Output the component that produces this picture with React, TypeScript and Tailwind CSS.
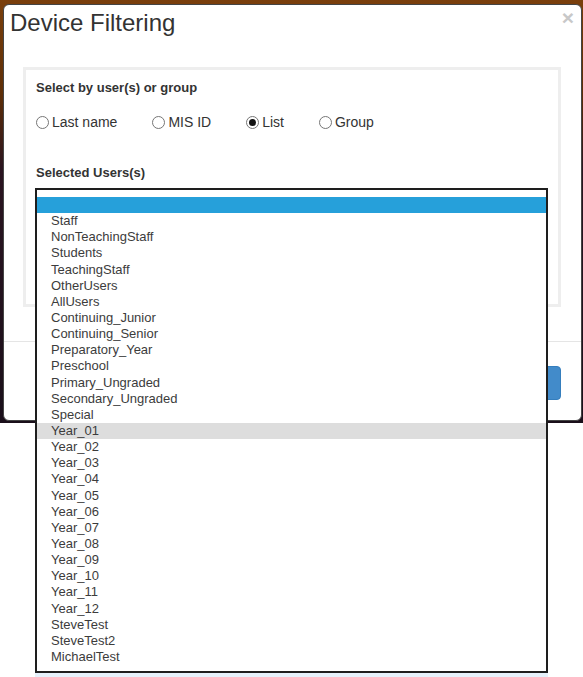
import React from "react";

const options = [
  "",
  "Staff",
  "NonTeachingStaff",
  "Students",
  "TeachingStaff",
  "OtherUsers",
  "AllUsers",
  "Continuing_Junior",
  "Continuing_Senior",
  "Preparatory_Year",
  "Preschool",
  "Primary_Ungraded",
  "Secondary_Ungraded",
  "Special",
  "Year_01",
  "Year_02",
  "Year_03",
  "Year_04",
  "Year_05",
  "Year_06",
  "Year_07",
  "Year_08",
  "Year_09",
  "Year_10",
  "Year_11",
  "Year_12",
  "SteveTest",
  "SteveTest2",
  "MichaelTest",
];

function Radio({ label, checked }: { label: string; checked?: boolean }) {
  return (
    <label className="flex items-center gap-[3px] text-[14px] leading-[20px] text-[#333333]">
      <span className="flex h-[13px] w-[13px] items-center justify-center rounded-full border border-[#767676] bg-white">
        {checked && <span className="h-[7px] w-[7px] rounded-full bg-[#111111]" />}
      </span>
      <span>{label}</span>
    </label>
  );
}

export default function App() {
  return (
    <div
      className="relative h-[677px] w-[583px] overflow-hidden bg-white"
      style={{ fontFamily: '"Liberation Sans", Arial, sans-serif' }}
    >
      {/* backdrop */}
      <div className="h-[423px] bg-[linear-gradient(180deg,#7a3f0c_0%,#5e2e07_22%,#2a1420_40%,#1a0f1a_100%)] pt-[4px] pl-[3px] pr-[1px]">
        <div className="relative flex h-[417px] w-[579px] flex-col rounded-[6px] border border-[#444444] bg-white">
          {/* close */}
          <span className="absolute right-[7px] top-[2px] text-[21px] font-bold leading-[21px] text-[#c8c8c8]">
            ×
          </span>
          {/* header */}
          <div className="pl-[6px] pt-[5px]">
            <h1 className="text-[24px] leading-[26px] text-[#333333]">Device Filtering</h1>
          </div>
          {/* body */}
          <div className="ml-[19px] mr-[20px] mt-[31px] h-[240px] border-[3px] border-[#eeeeee] pl-[10px] pt-[10px]">
            <div className="text-[13px] font-bold leading-[16px] text-[#333333]">
              Select by user(s) or group
            </div>
            <div className="mt-[16px] flex items-center gap-[35px]">
              <Radio label="Last name" />
              <Radio label="MIS ID" />
              <Radio label="List" checked />
              <Radio label="Group" />
            </div>
            <div className="mt-[33px] text-[13px] font-bold leading-[16px] text-[#333333]">
              Selected Users(s)
            </div>
          </div>
          {/* footer */}
          <div className="mt-auto flex justify-end border-t border-[#e5e5e5] pb-[20px] pr-[20px] pt-[24px]">
            <button className="h-[34px] w-[64px] rounded-[4px] border border-[#357ebd] bg-[#428bca] text-[14px] text-white">
              Save
            </button>
          </div>
        </div>
      </div>

      {/* open list popup */}
      <div className="absolute left-[35px] top-[188px] w-[513px]">
        <div className="h-[485px] border-2 border-[#1e1e1e] bg-white pt-[7px]">
          {options.map((o, i) => (
            <div
              key={i}
              className={
                "h-[16.15px] pl-[14px] text-[13px] leading-[16px] text-[#3c3c3c] " +
                (i === 0 ? "bg-[#26a0da]" : o === "Year_01" ? "bg-[#dddddd]" : "")
              }
            >
              {o}
            </div>
          ))}
        </div>
        <div className="h-[6px] bg-[#e6f1fb]" />
      </div>
    </div>
  );
}
